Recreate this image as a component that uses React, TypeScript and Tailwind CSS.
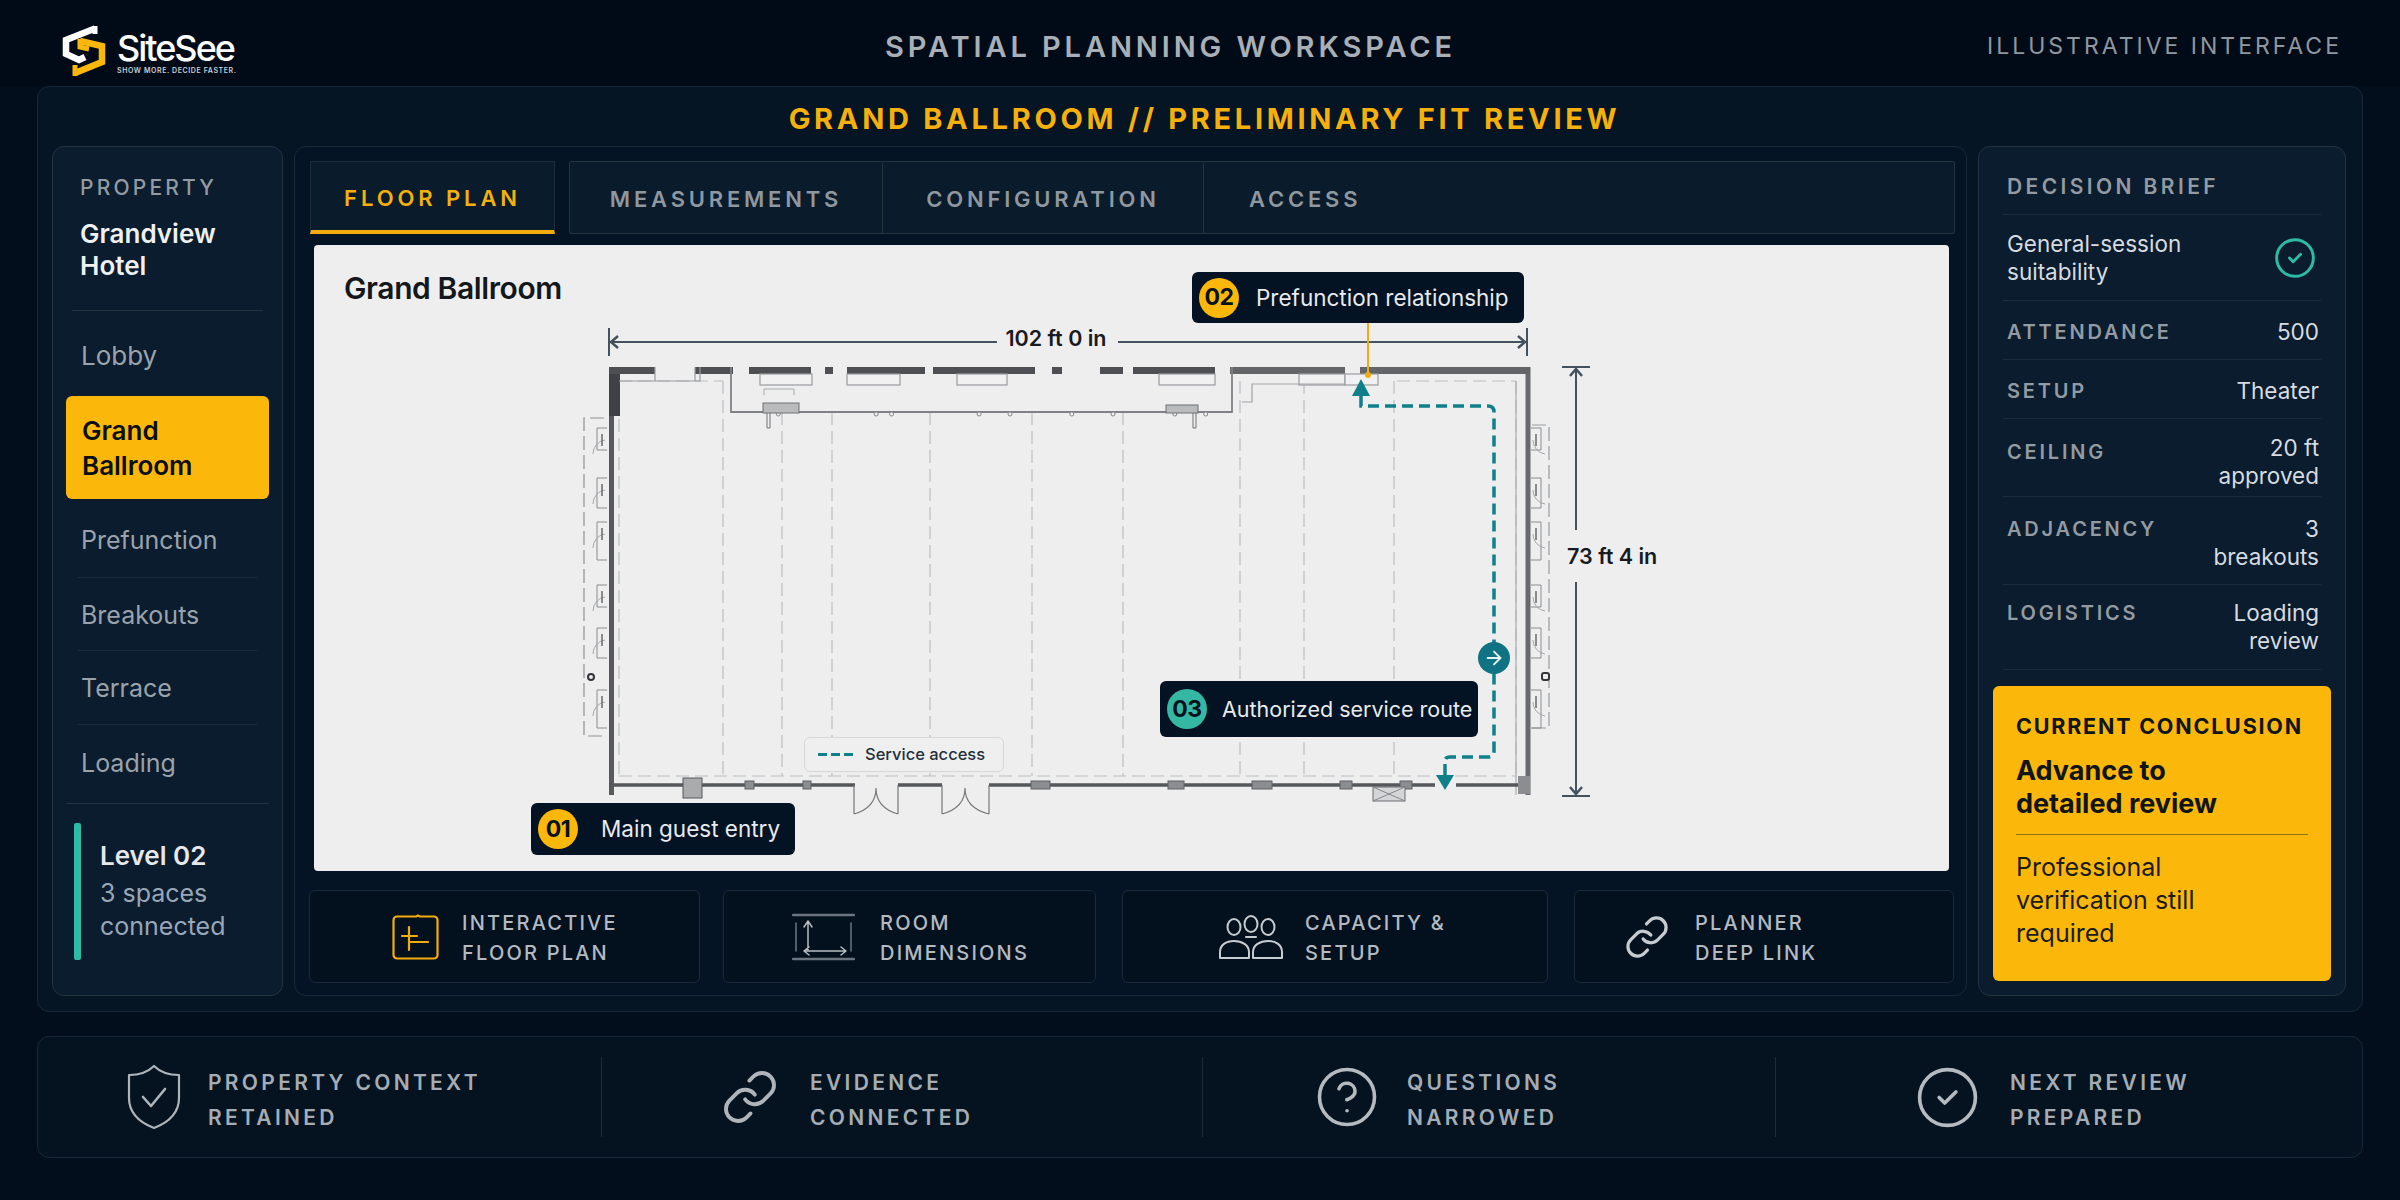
import React from "react";
import { ArrowRight, CircleCheck, CircleHelp, Link } from "lucide-react";

const spaces = [
  { name: "Prefunction", h: "h-[79px] pt-[6px]" },
  { name: "Breakouts", h: "h-[73px] pt-[3px]" },
  { name: "Terrace", h: "h-[74px] pt-[2px]" },
  { name: "Loading", h: "h-[79px]" },
];

const topWall = [
  [609, 655], [695, 733], [749, 811], [825, 833], [847, 925], [933, 1035], [1052, 1062], [1100, 1123],
  [1133, 1215], [1230, 1345], [1360, 1530],
];
const alcoves = [
  [760, 812], [847, 900], [957, 1007], [1159, 1215], [1299, 1345], [1345, 1378],
];
const columns = [723, 832, 930, 1032, 1123, 1240, 1304, 1394];
const studs = [775, 870, 885, 970, 1000, 1060, 1100, 1160, 1190];
const bottomBits = [
  [745, 754], [803, 811], [1031, 1050], [1168, 1184], [1252, 1272], [1340, 1352], [1400, 1412],
];

function AnnexDetail({ x, flip }: { x: number; flip?: boolean }) {
  const d = flip ? -1 : 1;
  const ys = [428, 478, 522, 585, 628, 690];
  return (
    <g fill="none" stroke="#8a8c8f" strokeWidth="1">
      {ys.map((y, i) => (
        <g key={y}>
          <path d={`M${x} ${y}h${d * 10}v${22 + (i % 3) * 8}h${d * -10}`} />
          <path d={`M${x + d * 14} ${y + 26}a14 14 0 0 1 ${d * -12} -14`} stroke="#a5a7aa" />
          <path d={`M${x + d * 5} ${y + 6}v12`} strokeWidth="1.5" stroke="#66686b" />
        </g>
      ))}
    </g>
  );
}

function FloorPlanDrawing() {
  return (
    <svg className="absolute inset-0" width="1635" height="626" viewBox="314 245 1635 626" fill="none">
      {/* column lines */}
      <g stroke="#bcbec1" strokeWidth="1.2" strokeDasharray="13 6">
        <path d="M619 381V776M619 381H723M619 776H1516M1397 381H1516M1516 381V776" />
        <path d="M782 412V776" />
        {columns.map((x) => (
          <path key={x} d={`M${x} ${x > 723 && x < 1232 ? 412 : 381}V776`} />
        ))}
      </g>
      {/* walls */}
      <path d="M611.5 367V795" stroke="#57595c" strokeWidth="5" />
      <path d="M609 367h11v49h-11z" fill="#3f4144" />
      <path d="M1528 367V795" stroke="#67696c" strokeWidth="5" />
      <path d="M1516 381V795" stroke="#b5b7b9" strokeWidth="1.5" />
      {topWall.map(([a, b]) => (
        <rect key={a} x={a} y="367" width={b - a} height="7" fill={a > 1200 ? "#636568" : "#4d4f52"} />
      ))}
      <path d="M619 381H700V367M655 367V381M695 367V381" stroke="#9a9c9f" strokeWidth="1.2" />
      {alcoves.map(([a, b]) => (
        <rect key={a} x={a} y="374" width={b - a} height="11" fill="#f1f1f2" stroke="#9a9c9f" strokeWidth="1.2" />
      ))}
      <path d="M731 367V412H1232V367" stroke="#7f8184" strokeWidth="1.8" />
      <path d="M1242 402H1252V384H1345" stroke="#a0a2a5" strokeWidth="1.2" />
      {studs.map((x) => (
        <circle key={x} cx={x * 1.03 - 20} cy="414" r="2" fill="#f1f1f2" stroke="#85878a" />
      ))}
      <g fill="#b9bbbd" stroke="#6e7073">
        <rect x="763" y="403" width="36" height="10" />
        <path d="M767 413V428h3V413" fill="none" />
        <rect x="1166" y="405" width="32" height="8" />
        <path d="M1193 413V428h3V413" fill="none" />
      </g>
      <path d="M764 395V389H794V395" stroke="#a8aaad" />
      {/* bottom wall */}
      <path d="M609 785H855M898 785H942M989 785H1435M1456 785H1530" stroke="#55575a" strokeWidth="3.5" />
      {bottomBits.map(([a, b]) => (
        <rect key={a} x={a} y="781" width={b - a} height="8" fill="#8b8d90" stroke="#5f6164" />
      ))}
      <rect x="683" y="778" width="19" height="20" fill="#a9abad" stroke="#55575a" />
      <rect x="1373" y="787" width="32" height="14" fill="#d4d5d7" stroke="#6b6d70" />
      <path d="M1373 787L1405 801M1405 787L1373 801" stroke="#85878a" />
      <path d="M1518 776h12v18h-12z" fill="#8b8d90" />
      {/* doors */}
      <g stroke="#75777a" strokeWidth="1.2">
        <path d="M854 785V814M898 785V814M876 788C876 802 868 810 854 814M876 788C876 802 884 810 898 814" />
        <path d="M942 785V814M989 785V814M965 788C965 802 957 810 942 814M965 788C965 802 973 810 989 814" />
      </g>
      {/* annexes */}
      <path d="M604 418H584V736H604" stroke="#8f9194" strokeWidth="1.2" strokeDasharray="14 5" />
      <path d="M1532 425H1549V728H1532" stroke="#9a9c9f" strokeWidth="1.2" strokeDasharray="14 5" />
      <AnnexDetail x={607} flip />
      <AnnexDetail x={1531} />
      <circle cx="591" cy="677" r="3" stroke="#333538" strokeWidth="2" />
      <rect x="1542" y="673" width="7" height="7" rx="2" stroke="#333538" strokeWidth="2" />
      {/* dimensions */}
      <g stroke="#44525f" strokeWidth="2">
        <path d="M609 328V356M1527 328V356M610 342H997M1118 342H1526M1562 367H1590M1562 796H1590M1576 368V530M1576 582V795" />
        <path d="M618 336L611 342L618 348M1518 336L1525 342L1518 348M1570 376L1576 369L1582 376M1570 787L1576 794L1582 787" strokeWidth="2.5" />
      </g>
      {/* prefunction leader */}
      <path d="M1368 323V376" stroke="#f2ad0d" strokeWidth="2" />
      <circle cx="1368" cy="375" r="3" fill="#f2ad0d" />
      {/* service route */}
      <path d="M1361 396V406H1488Q1494 406 1494 412V751Q1494 757 1488 757H1450Q1445 757 1445 761" stroke="#0f7f8a" strokeWidth="3.5" strokeDasharray="11 6" />
      <path d="M1361 379L1370 396H1352Z" fill="#0f7f8a" />
      <path d="M1445 764V777" stroke="#0f7f8a" strokeWidth="3.5" />
      <path d="M1436 775H1454L1445 790Z" fill="#0f7f8a" />
    </svg>
  );
}

function Callout({ num, text, teal, className, textClass }: { num: string; text: string; teal?: boolean; className: string; textClass: string }) {
  return (
    <div className={`absolute flex items-center rounded-md bg-[#031323] pl-[7px] ${className}`}>
      <span
        className={`flex h-[40px] w-[40px] shrink-0 items-center justify-center rounded-full text-[23px] font-bold tracking-[-0.5px] text-[#06121d] ${
          teal ? "bg-[#35b8a3]" : "bg-[#fbb80a]"
        }`}
      >
        {num}
      </span>
      <span className={`whitespace-nowrap text-[#e8eaec] ${textClass}`}>{text}</span>
    </div>
  );
}

function FloorIcon() {
  return (
    <svg width="47" height="46" viewBox="0 0 47 46" fill="none" stroke="#f2ad0d" strokeWidth="2.2" strokeLinecap="round" strokeLinejoin="round">
      <path d="M5 2.5H24L26 1.5L28 2.5H42a3.5 3.5 0 0 1 3.5 3.5V41a3.5 3.5 0 0 1-3.5 3.5H5a3.5 3.5 0 0 1-3.5-3.5V6a3.5 3.5 0 0 1 3.5-3.5Z" />
      <path d="M17 13V36M10 22H25M17 28H36" />
    </svg>
  );
}

function DimsIcon() {
  return (
    <svg width="63" height="48" viewBox="0 0 63 48" fill="none" stroke="#b6bcc2" strokeWidth="1.5" strokeLinecap="round" strokeLinejoin="round">
      <path d="M1 2H62M1 46H62" stroke="#6b7580" strokeWidth="2.5" />
      <path d="M4 10V38M59 10V38" stroke="#6b7580" />
      <path d="M16 38V8M12 14L16 8L20 14M12 38H54M17 34L12 38L17 42M49 34L54 38L49 42" />
    </svg>
  );
}

function PeopleIcon() {
  return (
    <svg width="66" height="46" viewBox="0 0 66 46" fill="none" stroke="#c6cbd0" strokeWidth="2" strokeLinecap="round" strokeLinejoin="round">
      <ellipse cx="16" cy="13" rx="6.5" ry="8" />
      <ellipse cx="33" cy="10" rx="6.5" ry="8" />
      <ellipse cx="50" cy="13" rx="6.5" ry="8" />
      <path d="M28 23H38" />
      <path d="M2 44V38C2 31 8 27 16 27C24 27 31 31 31 38V44ZM35 44V38C35 31 42 27 50 27C58 27 64 31 64 38V44Z" />
    </svg>
  );
}

function ShieldIcon() {
  return (
    <svg width="54" height="66" viewBox="0 0 54 66" fill="none" stroke="#aeb4ba" strokeWidth="2.2" strokeLinecap="round" strokeLinejoin="round">
      <path d="M27 2C33 8 42 11 52 11V34C52 50 40 59 27 64C14 59 2 50 2 34V11C12 11 21 8 27 2Z" />
      <path d="M16 33L24 42L38 25" strokeWidth="2.6" />
    </svg>
  );
}

function Logo() {
  return (
    <div className="mt-[25px] flex items-start self-start">
      <svg width="46" height="52" viewBox="0 0 46 52" fill="none" strokeLinejoin="miter">
        <path d="M33 3.5L4 15V29L17 35L23 32" stroke="#ffffff" strokeWidth="6.5" />
        <path d="M33 1V9" stroke="#ffffff" strokeWidth="5" />
        <path d="M18 16L40 21V37L13 48" stroke="#fbb80a" strokeWidth="6.5" />
        <path d="M13 40V51" stroke="#fbb80a" strokeWidth="5" />
        <path d="M18 14V22L27 24" stroke="#fbb80a" strokeWidth="5" />
      </svg>
      <div className="ml-[9px] flex flex-col pt-[9px]">
        <span className="text-[36px] leading-[28px] font-medium tracking-[-2px] text-white">SiteSee</span>
        <span className="mt-[5px] whitespace-nowrap text-[7px] leading-[8px] font-semibold tracking-[0.6px] text-[#c9ced3]">
          SHOW MORE. DECIDE FASTER.
        </span>
      </div>
    </div>
  );
}

function FeatureCard({ icon, lines, className }: { icon: React.ReactNode; lines: string[]; className: string }) {
  return (
    <div className={`flex items-center rounded-md border border-[#1a2a39] bg-[#03111f] ${className}`}>
      {icon}
      <div className="pt-[2px] text-[20px] leading-[30px] font-medium tracking-[2.2px] text-[#b4bac0]">
        {lines.map((l) => (
          <div key={l}>{l}</div>
        ))}
      </div>
    </div>
  );
}

function BriefRow({ label, value, h, labelClass }: { label: string; value: string[]; h: string; labelClass?: string }) {
  return (
    <div className={`flex items-start justify-between border-b border-[#1d2c3b] pl-[4px] pr-[2px] ${h}`}>
      <span className={`text-[20px] leading-[28px] font-semibold tracking-[2.8px] text-[#929aa2] ${labelClass ?? ""}`}>{label}</span>
      <div className="text-right text-[22.5px] leading-[28px] text-[#d6dbe0]">
        {value.map((v) => (
          <div key={v}>{v}</div>
        ))}
      </div>
    </div>
  );
}

function StripItem({ icon, lines, className }: { icon: React.ReactNode; lines: string[]; className: string }) {
  return (
    <div className={`flex h-[80px] items-center ${className}`}>
      {icon}
      <div className="pt-[6px] text-[21px] leading-[35px] font-semibold tracking-[3.3px] text-[#a5acb3]">
        {lines.map((l) => (
          <div key={l}>{l}</div>
        ))}
      </div>
    </div>
  );
}

export default function App() {
  return (
    <div className="flex h-[1200px] w-[2400px] flex-col overflow-hidden bg-[#020e1c] font-['Inter',sans-serif]">
      {/* header */}
      <div className="relative flex h-[86px] shrink-0 items-center justify-between bg-[#010b18] pl-[62px] pr-[58px]">
        <Logo />
        <span className="absolute left-[885px] top-[30px] text-[29px] leading-[34px] font-semibold tracking-[3.9px] text-[#a9afb6]">
          SPATIAL PLANNING WORKSPACE
        </span>
        <span className="pt-[6px] text-[23px] tracking-[3px] text-[#8f979f]">ILLUSTRATIVE INTERFACE</span>
      </div>

      {/* main frame */}
      <div className="mx-[37px] flex h-[926px] shrink-0 flex-col rounded-xl border border-[#17283a] bg-[#051524]">
        <div className="flex h-[59px] items-center justify-center pl-[9px] pt-[5px] text-[29px] font-bold tracking-[3.7px] text-[#f5b00c]">
          GRAND BALLROOM // PRELIMINARY FIT REVIEW
        </div>
        <div className="flex h-[850px] gap-[11px] px-[14px]">
          {/* left panel */}
          <div className="flex w-[231px] shrink-0 flex-col rounded-xl border border-[#24343f] bg-[#0a1c2d] px-[13px]">
            <div className="mx-[6px] h-[164px] border-b border-[#24333f] pl-[8px] pt-[26px]">
              <div className="text-[21px] leading-[30px] font-medium tracking-[3.2px] text-[#939aa1]">PROPERTY</div>
              <div className="mt-[15px] text-[26px] leading-[32px] font-semibold text-[#eef0f2]">
                Grandview
                <br />
                Hotel
              </div>
            </div>
            <div className="flex h-[85px] items-center pl-[15px] pt-[3px] text-[26px] text-[#9aa3ab]">Lobby</div>
            <div className="flex h-[103px] items-center rounded-md bg-[#fbb80a] pl-[16px] text-[26px] leading-[35px] font-semibold text-[#0a0f14]">
              <div>
                Grand
                <br />
                Ballroom
              </div>
            </div>
            {spaces.map((s) => (
              <div key={s.name} className={`mx-[12px] flex items-center border-b border-[#1c2c3a] pl-[3px] text-[25px] text-[#9aa3ab] ${s.h}`}>
                {s.name}
              </div>
            ))}
            <div className="-mt-[1px] flex gap-[19px] border-t border-[#24333f] pl-[8px] pt-[19px]">
              <div className="h-[137px] w-[7px] rounded-[2px] bg-[#2dbba6]" />
              <div className="pt-[15px]">
                <div className="text-[26px] leading-[36px] font-semibold text-[#e6e9ec]">Level 02</div>
                <div className="mt-[3px] text-[25px] leading-[33px] text-[#98a7b8]">
                  3 spaces
                  <br />
                  connected
                </div>
              </div>
            </div>
          </div>

          {/* centre panel */}
          <div className="flex w-[1673px] shrink-0 flex-col rounded-xl border border-[#1a2a39] bg-[#051424] pl-[15px] pt-[14px]">
            <div className="flex h-[73px] shrink-0 gap-[14px]">
              <div className="flex w-[245px] items-center justify-center border-x border-t border-[#1d2d3c] border-b-[4px] border-b-[#f2ad0d] bg-[#0a1c2c] pt-[4px] text-[22px] font-semibold tracking-[3.9px] text-[#f5b00c]">
                FLOOR PLAN
              </div>
              <div className="flex w-[1386px] rounded-[2px] border border-[#24343f] bg-[#0a1b2b] pt-[1px] text-[22px] font-semibold tracking-[3.8px] text-[#8f979f]">
                <div className="flex w-[313px] items-center justify-center border-r border-[#24343f] pt-[2px]">MEASUREMENTS</div>
                <div className="flex w-[321px] items-center justify-center border-r border-[#24343f] pt-[2px]">CONFIGURATION</div>
                <div className="flex items-center pl-[45px] pt-[2px]">ACCESS</div>
              </div>
            </div>

            {/* plan */}
            <div className="relative ml-[4px] mt-[11px] h-[626px] w-[1635px] shrink-0 rounded-[4px] bg-[#eeeeef]">
              <FloorPlanDrawing />
              <div className="absolute left-[30px] top-[25px] text-[30px] leading-[36px] font-semibold tracking-[-0.4px] text-[#14171c]">
                Grand Ballroom
              </div>
              <div className="absolute left-[680px] top-[80px] w-[124px] text-center text-[21.5px] leading-[26px] font-semibold text-[#171a1f]">
                102 ft 0 in
              </div>
              <div className="absolute left-[1253px] top-[298px] whitespace-nowrap text-[21.5px] leading-[26px] font-semibold text-[#171a1f]">
                73 ft 4 in
              </div>
              <Callout num="02" text="Prefunction relationship" textClass="ml-[17px] text-[22.5px]" className="left-[878px] top-[27px] h-[51px] w-[332px]" />
              <Callout num="03" text="Authorized service route" teal textClass="ml-[15px] text-[21.5px]" className="left-[846px] top-[436px] h-[56px] w-[318px]" />
              <Callout num="01" text="Main guest entry" textClass="ml-[23px] text-[22.5px]" className="left-[217px] top-[558px] h-[52px] w-[264px]" />
              <div className="absolute left-[1164px] top-[397px] flex h-[32px] w-[32px] items-center justify-center rounded-full bg-[#0f7384]">
                <ArrowRight size={22} color="#e7f3f3" strokeWidth={2} />
              </div>
              <div className="absolute left-[490px] top-[492px] flex h-[35px] w-[200px] items-center rounded-md border border-[#d6d7d9] bg-[#efeff0] pl-[13px]">
                <span className="h-[3px] w-[9px] bg-[#0f7f8a]" />
                <span className="ml-[4px] h-[3px] w-[9px] bg-[#0f7f8a]" />
                <span className="ml-[4px] h-[3px] w-[9px] bg-[#0f7f8a]" />
                <span className="ml-[12px] text-[16.5px] font-medium text-[#25303a]">Service access</span>
              </div>
            </div>

            {/* feature cards */}
            <div className="-ml-[1px] mt-[19px] flex h-[93px] shrink-0 gap-[23px]">
              <FeatureCard
                className="w-[391px] gap-[23px] pl-[82px]"
                icon={<FloorIcon />}
                lines={["INTERACTIVE", "FLOOR PLAN"]}
              />
              <FeatureCard
                className="w-[373px] gap-[25px] pl-[68px]"
                icon={<DimsIcon />}
                lines={["ROOM", "DIMENSIONS"]}
              />
              <FeatureCard
                className="ml-[3px] w-[426px] gap-[21px] pl-[95px]"
                icon={<PeopleIcon />}
                lines={["CAPACITY &", "SETUP"]}
              />
              <FeatureCard
                className="ml-[3px] w-[380px] gap-[25px] pl-[49px]"
                icon={<Link size={46} color="#c6cbd0" strokeWidth={1.7} />}
                lines={["PLANNER", "DEEP LINK"]}
              />
            </div>
          </div>

          {/* right panel */}
          <div className="flex w-[368px] shrink-0 flex-col rounded-xl border border-[#24343f] bg-[#0a1c2d] px-[14px]">
            <div className="mx-[10px]">
              <div className="flex h-[68px] items-center border-b border-[#1d2c3b] pl-[4px] pt-[13px] text-[21px] font-semibold tracking-[3.4px] text-[#939aa1]">
                DECISION BRIEF
              </div>
              <div className="flex h-[86px] items-center justify-between border-b border-[#1d2c3b] pl-[4px] pr-[4px]">
                <div className="text-[22.5px] leading-[28px] text-[#d6dbe0]">
                  General-session
                  <br />
                  suitability
                </div>
                <CircleCheck size={44} color="#2dbba6" strokeWidth={1.6} />
              </div>
              <BriefRow label="ATTENDANCE" value={["500"]} h="h-[59px] pt-[17px]" />
              <BriefRow label="SETUP" value={["Theater"]} h="h-[59px] pt-[17px]" />
              <BriefRow label="CEILING" labelClass="mt-[4px]" value={["20 ft", "approved"]} h="h-[78px] pt-[15px]" />
              <BriefRow label="ADJACENCY" value={["3", "breakouts"]} h="h-[88px] pt-[18px]" />
              <BriefRow label="LOGISTICS" value={["Loading", "review"]} h="h-[85px] pt-[14px]" />
            </div>
            <div className="mt-[16px] flex h-[295px] flex-col rounded-md bg-[#fbb80a] px-[23px] pt-[26px]">
              <div className="text-[21.5px] leading-[28px] font-bold tracking-[1.8px] text-[#10151a]">CURRENT CONCLUSION</div>
              <div className="mt-[14px] border-b border-[#8a7420] pb-[14px] text-[27px] leading-[33px] font-bold text-[#10151a]">
                Advance to
                <br />
                detailed review
              </div>
              <div className="mt-[16px] text-[25px] leading-[33px] text-[#1a1c1a]">
                Professional
                <br />
                verification still
                <br />
                required
              </div>
            </div>
          </div>
        </div>
      </div>

      {/* bottom strip */}
      <div className="mx-[37px] mt-[24px] flex h-[122px] shrink-0 items-center rounded-xl border border-[#17283a] bg-[#04131f]">
        <StripItem
          className="w-[564px] gap-[27px] border-r border-[#1d2c3b] pl-[89px]"
          icon={<ShieldIcon />}
          lines={["PROPERTY CONTEXT", "RETAINED"]}
        />
        <StripItem
          className="w-[601px] gap-[31px] border-r border-[#1d2c3b] pl-[119px]"
          icon={<Link size={58} color="#aeb4ba" strokeWidth={1.6} />}
          lines={["EVIDENCE", "CONNECTED"]}
        />
        <StripItem
          className="w-[573px] gap-[27px] border-r border-[#1d2c3b] pl-[111px]"
          icon={<CircleHelp size={66} color="#b4bac0" strokeWidth={1.3} />}
          lines={["QUESTIONS", "NARROWED"]}
        />
        <StripItem
          className="gap-[29px] pl-[138px]"
          icon={<CircleCheck size={67} color="#b4bac0" strokeWidth={1.3} />}
          lines={["NEXT REVIEW", "PREPARED"]}
        />
      </div>
    </div>
  );
}
